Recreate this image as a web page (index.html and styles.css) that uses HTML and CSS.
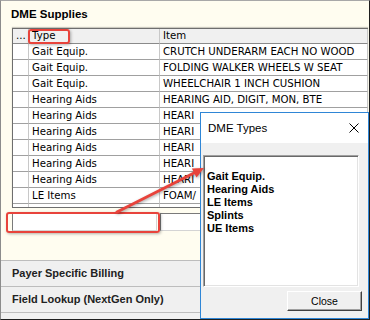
FILE: index.html
```html
<!DOCTYPE html>
<html lang="en">
<head>
    <meta charset="utf-8">
    <title>DME Supplies</title>
    <link rel="stylesheet" href="styles.css">
</head>
<body>
    <div class="panel">
        <div class="title">DME Supplies</div>
        <div class="grid">
            <table>
                <tr><th class="c-sel">...</th><th class="c-type">Type</th><th>Item</th></tr>
                <tr><td></td><td>Gait Equip.</td><td>CRUTCH UNDERARM EACH NO WOOD</td></tr>
                <tr><td></td><td>Gait Equip.</td><td>FOLDING WALKER WHEELS W SEAT</td></tr>
                <tr><td></td><td>Gait Equip.</td><td>WHEELCHAIR 1 INCH CUSHION</td></tr>
                <tr><td></td><td>Hearing Aids</td><td>HEARING AID, DIGIT, MON, BTE</td></tr>
                <tr><td></td><td>Hearing Aids</td><td>HEARI</td></tr>
                <tr><td></td><td>Hearing Aids</td><td>HEARI</td></tr>
                <tr><td></td><td>Hearing Aids</td><td>HEARI</td></tr>
                <tr><td></td><td>Hearing Aids</td><td>HEARI</td></tr>
                <tr><td></td><td>Hearing Aids</td><td>HEARI</td></tr>
                <tr><td></td><td>LE Items</td><td>FOAM/</td></tr>
                <tr><td></td><td></td><td></td></tr>
            </table>
        </div>
        <div class="entry">
            <input type="text" class="entry-type">
            <input type="text" class="entry-item">
        </div>
        <div class="spacer"></div>
        <div class="section">Payer Specific Billing</div>
        <div class="section">Field Lookup (NextGen Only)</div>
        <div class="section section-end"></div>

        <div class="mark mark-type"></div>
        <div class="mark mark-entry"></div>

        <div class="dialog">
            <div class="dialog-head">
                <span class="dialog-title">DME Types</span>
                <svg class="dialog-x" width="10" height="10" viewBox="0 0 10 10">
                    <path d="M0.5 0.5L9.5 9.5M9.5 0.5L0.5 9.5" stroke="#000" stroke-width="1" fill="none"/>
                </svg>
            </div>
            <div class="dialog-body">
                <ul class="list">
                    <li>&nbsp;</li>
                    <li>Gait Equip.</li>
                    <li>Hearing Aids</li>
                    <li>LE Items</li>
                    <li>Splints</li>
                    <li>UE Items</li>
                </ul>
                <div class="dialog-foot">
                    <button type="button">Close</button>
                </div>
            </div>
        </div>

        <svg class="arrow" width="370" height="320" viewBox="0 0 370 320">
            <line x1="117" y1="212" x2="196" y2="172" stroke="#e8433b" stroke-width="3" stroke-linecap="round"/>
            <polygon points="204,168 196.5,177.5 191.9,168.5" fill="#e8433b"/>
        </svg>
    </div>
</body>
</html>
```

FILE: styles.css
```css
* { margin: 0; padding: 0; box-sizing: border-box; }
body {
    width: 370px; height: 320px; overflow: hidden;
    font-family: 'DejaVu Sans', Verdana, sans-serif; color: #000;
}
.panel {
    position: relative; display: flex; flex-direction: column;
    width: 370px; height: 320px; background: #fffdf0;
    border: 1px solid #1e1e1e; border-color: #a8a8a8 #1e1e1e #1e1e1e #8c8c8c;
}
.title {
    height: 27px; padding: 6px 0 0 10px;
    font: bold 11.5px/14px 'Liberation Sans', Arial, sans-serif;
}
.grid {
    height: 180px; margin: 0 1px 0 11px; flex-shrink: 0;
    background: #fff; border: 1px solid #6e6e6e; border-right: none;
    overflow: hidden; box-shadow: 0 -1px 1px rgba(0, 0, 0, 0.2);
}
table { border-collapse: separate; border-spacing: 0; table-layout: fixed; width: 100%; }
th, td {
    height: 16px; padding: 0 0 0 3px;
    border-right: 1px solid #c8c8c8; border-bottom: 1px solid #a0a0a0;
    font-size: 10.2px; line-height: 15px; font-weight: normal; text-align: left;
    white-space: nowrap; overflow: hidden;
}
th { height: 15px; line-height: 14px; background: #f0f0f0; border-bottom-color: #8a8a8a; }
.c-sel { width: 16px; }
.c-type { width: 131px; }
.entry { display: flex; gap: 3px; margin: 5px 1px 0 11px; }
.entry input {
    height: 18px; background: #fff; outline: none;
    border: 1px solid #7a7a7a; border-color: #7a7a7a #d4d4d4 #d4d4d4 #7a7a7a;
}
.entry-type { width: 145px; }
.entry-item { flex: 1; min-width: 0; }
.spacer { flex: 1; }
.section {
    height: 26px; padding-left: 11px; flex-shrink: 0;
    background: #f0f0f0; border-top: 1px solid #bdbdbd; color: #222;
    font: bold 11px/25px 'Liberation Sans', Arial, sans-serif;
}
.section-end { height: 7px; }

.mark {
    position: absolute; border: 2px solid #e8433b; border-radius: 3px;
    box-shadow: 1px 1px 3px rgba(0, 0, 0, 0.3);
}
.mark-type { left: 27px; top: 28px; width: 42px; height: 15px; }
.mark-entry { left: 5px; top: 211px; width: 154px; height: 21px; }

.dialog {
    position: absolute; left: 199px; top: 111px; width: 169px; height: 207px;
    display: flex; flex-direction: column;
    border: 1px solid #2f86d6; background: #f0f0f0;
}
.dialog-head {
    display: flex; align-items: center; justify-content: space-between;
    height: 30px; padding: 0 9px 0 7px; background: #fff;
}
.dialog-title { font: 11.5px/14px 'Liberation Sans', Arial, sans-serif; }
.dialog-body { flex: 1; padding: 12px 0 0 2px; }
.list {
    list-style: none; width: 156px; height: 132px; background: #fff;
    border: 1px solid #a0a0a0; border-color: #a0a0a0 #fff #fff #a0a0a0;
    box-shadow: inset 1px 1px 0 #696969, inset -1px -1px 0 #e3e3e3;
    padding: 1px 0 0 1px;
}
.list li { height: 13px; padding-left: 2px; font: bold 11px/13px 'Liberation Sans', Arial, sans-serif; }
.dialog-foot { display: flex; justify-content: flex-end; margin-top: 4px; padding-right: 6px; }
.dialog-foot button {
    width: 75px; height: 20px; background: #f0f0f0; color: #000;
    border: 1px solid #404040; border-color: #fff #404040 #404040 #fff;
    box-shadow: inset -1px -1px 0 #a0a0a0;
    font: 10.5px 'Liberation Sans', Arial, sans-serif;
}

.arrow {
    position: absolute; left: -1px; top: -1px; pointer-events: none;
    filter: drop-shadow(1px 1px 1.5px rgba(0, 0, 0, 0.35));
}
```
